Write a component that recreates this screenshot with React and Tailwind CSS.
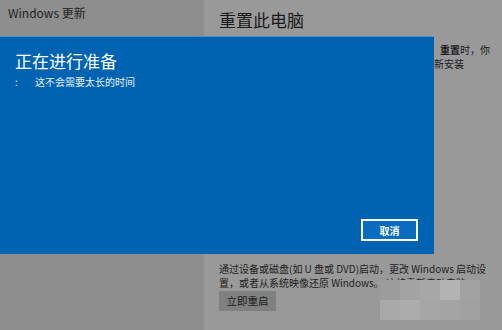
import React from 'react';

const font = { fontFamily: '"Noto Sans CJK SC", "Liberation Sans", sans-serif' };

const mosaic = [
  ['bg-[#9c9c9c]', 'bg-[#a3a3a3]', 'bg-[#a7a7a7]', 'bg-[#b3b3b3]', 'bg-[#a2a2a2]'],
  ['bg-[#a9a9a9]', 'bg-[#acacac]', 'bg-[#a6a6a6]', 'bg-[#a4a4a4]', 'bg-[#a1a1a1]'],
];

export default function App() {
  return (
    <div className="relative w-[502px] h-[330px] overflow-hidden bg-[#999999] text-[#1c1c1c]" style={font}>
      <div className="flex h-full">
        {/* Sidebar */}
        <div className="w-[204px] shrink-0 bg-[#8e8e8e] px-2 pt-[5px]">
          <div className="text-[12px] leading-[16px] text-[#222]">Windows 更新</div>
        </div>

        {/* Content */}
        <div className="flex-1 flex flex-col pl-[15px] pt-[8px]">
          <div className="text-[17px] leading-[24px] text-[#1a1a1a]">重置此电脑</div>
          <div className="mt-[11px] pl-[215px] flex flex-col gap-[1px] text-[10px] leading-[13px] text-[#1a1a1a] whitespace-nowrap">
            <div className="pl-[6px]"><span className="font-bold">重置</span>时，你</div>
            <div>新安装</div>
          </div>
          <div className="mt-auto pb-[19px]">
            <div className="text-[10px] leading-[14px] text-[#222] whitespace-nowrap">
              通过设备或磁盘(如 U 盘或 DVD)启动，更改 Windows 启动设
            </div>
            <div className="text-[10px] leading-[14px] text-[#222] whitespace-nowrap">
              置，或者从系统映像还原 Windows。 这将重新启动电脑
            </div>
            <div className="mt-[1px] w-[57px] h-[20px] bg-[#808080] flex items-center justify-center text-[10.5px] text-[#1a1a1a]">
              立即重启
            </div>
          </div>
        </div>
      </div>

      {/* Preparing dialog */}
      <div className="absolute left-0 top-[36px] w-[434px] h-[218px] bg-[#0063b1] border-t border-[#4d8fc6] text-white px-[15px] pt-[13px]">
        <div className="text-[17px] leading-[22px]">正在进行准备</div>
        <div className="mt-[3px] flex items-center text-[10px] leading-[14px] text-[#e8f0f8]">
          <span className="w-[20px]">:</span>
          <span>这不会需要太长的时间</span>
        </div>
        <div className="absolute left-[361px] top-[182px] w-[57px] h-[22px] border-2 border-white bg-[#0a6cbf] flex items-center justify-center text-[10px] font-bold">
          取消
        </div>
      </div>

      {/* Blurred mosaic */}
      <div className="absolute left-[380px] top-[280px] grid grid-cols-5">
        {mosaic.flat().map((c, i) => (
          <div key={i} className={`w-[20px] h-[20px] ${c}`} />
        ))}
      </div>
    </div>
  );
}
